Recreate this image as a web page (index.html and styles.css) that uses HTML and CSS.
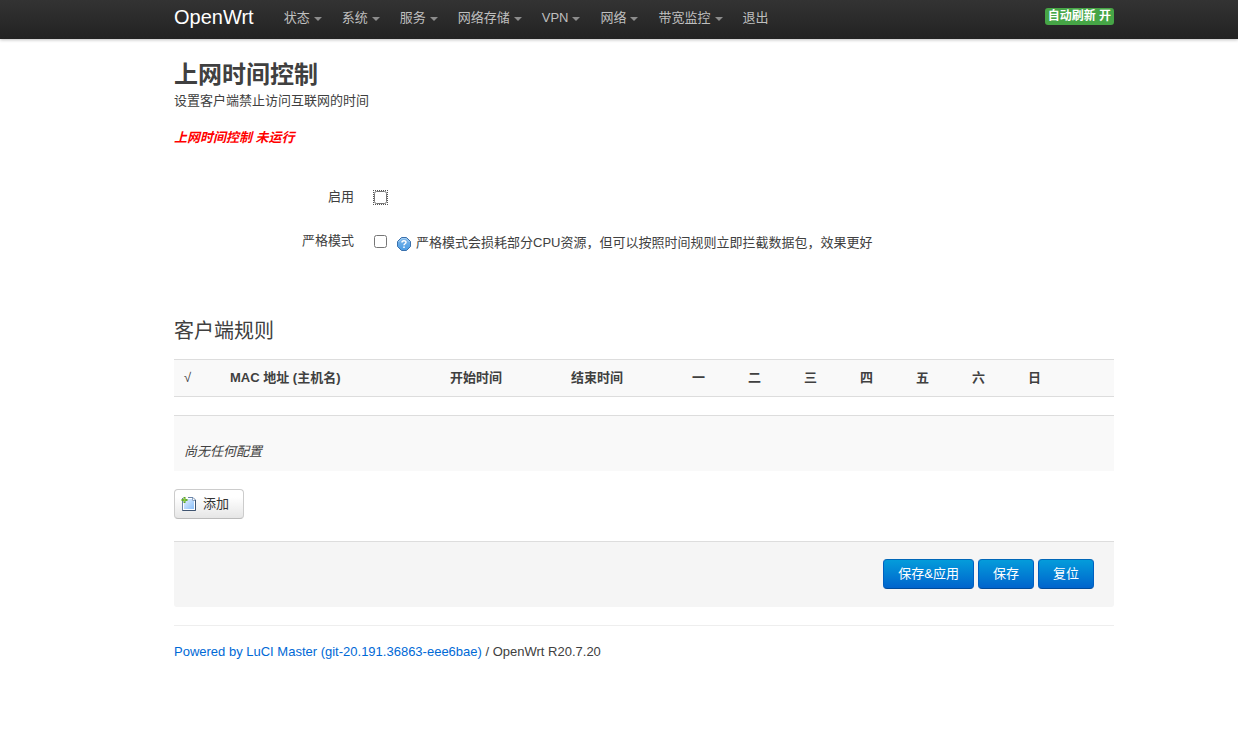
FILE: index.html
```html
<!DOCTYPE html>
<html lang="zh-CN">
<head>
<meta charset="utf-8">
<title>OpenWrt - 上网时间控制</title>
<link rel="stylesheet" href="styles.css">
</head>
<body>
<header class="topbar">
  <div class="container topbar-inner">
    <a class="brand" href="#">OpenWrt</a>
    <nav class="nav">
      <a class="menu" href="#">状态</a>
      <a class="menu" href="#">系统</a>
      <a class="menu" href="#">服务</a>
      <a class="menu" href="#">网络存储</a>
      <a class="menu" href="#">VPN</a>
      <a class="menu" href="#">网络</a>
      <a class="menu" href="#">带宽监控</a>
      <a href="#">退出</a>
    </nav>
    <button class="refresh" type="button">自动刷新 开</button>
  </div>
</header>
<main class="container">
  <h2>上网时间控制</h2>
  <p class="descr">设置客户端禁止访问互联网的时间</p>
  <p class="status">上网时间控制 未运行</p>
  <form>
    <div class="options">
      <div class="option">
        <label for="enable">启用</label>
        <input class="check focused" type="checkbox" id="enable">
      </div>
      <div class="option">
        <label for="strict">严格模式</label>
        <input class="check" type="checkbox" id="strict">
        <p class="help">
          <svg width="14" height="14" viewBox="0 0 14 14" aria-hidden="true">
            <defs><linearGradient id="ball" x1="0" y1="0" x2="0" y2="1"><stop offset="0" stop-color="#7fb8ea"/><stop offset="1" stop-color="#4a9ce4"/></linearGradient></defs>
            <path d="M4.5.5h5l4 4v5l-4 4h-5l-4-4v-5z" fill="url(#ball)" stroke="#3a70ac"/>
            <path d="M1.5 5l3.300-3.400h4.400L12.500 5" fill="none" stroke="#a8d0f4"/>
            <path d="M5 5.400C5 3.300 9 3.200 9 5.300 9 6.800 7 6.700 7 8.200M7 9.500v1.500" fill="none" stroke="#fff" stroke-width="1.500"/>
          </svg>
          <span>严格模式会损耗部分CPU资源，但可以按照时间规则立即拦截数据包，效果更好</span>
        </p>
      </div>
    </div>
    <h3>客户端规则</h3>
    <table class="rules">
      <thead>
        <tr>
          <th class="c-tick">√</th><th class="c-mac">MAC 地址 (主机名)</th><th class="c-time">开始时间</th><th class="c-time">结束时间</th>
          <th class="c-day">一</th><th class="c-day">二</th><th class="c-day">三</th><th class="c-day">四</th><th class="c-day">五</th><th class="c-day">六</th><th>日</th>
        </tr>
      </thead>
    </table>
    <p class="empty">尚无任何配置</p>
    <button class="btn add" type="button">
      <svg width="16" height="16" viewBox="0 0 16 16" aria-hidden="true">
        <defs><linearGradient id="page" x1="0" y1="0" x2="1" y2="1"><stop offset="0" stop-color="#e4f1ff"/><stop offset="1" stop-color="#8cc0fa"/></linearGradient></defs>
        <path d="M1.500 1.500H12L14.500 4v10.500h-13z" fill="#fff" stroke="#6b85a8"/>
        <path d="M14.500 4v10.500h-13" fill="none" stroke="#3f5470"/>
        <path d="M3 3h8v2h2v8H3z" fill="url(#page)"/>
        <path d="M11.500 2v2.500H14" fill="none" stroke="#8ba3c2"/>
        <path d="M0 0h7v2H0z" fill="#fcfcfc"/>
        <path d="M3.500 1v6M.5 4h6" stroke="#5ba329" stroke-width="2"/>
        <path d="M3.500 2v4M1.500 4h4" stroke="#8fcb45"/>
      </svg>
      添加
    </button>
    <div class="actions">
      <button class="btn primary" type="submit">保存&amp;应用</button>
      <button class="btn primary" type="submit">保存</button>
      <button class="btn primary" type="reset">复位</button>
    </div>
  </form>
  <footer><a href="#">Powered by LuCI Master (git-20.191.36863-eee6bae)</a> / OpenWrt R20.7.20</footer>
</main>
</body>
</html>
```
FILE: styles.css
```css
* {
  box-sizing: border-box;
}

body {
  margin: 0;
  background: #fff;
  color: #404040;
  font: 13px/18px "Liberation Sans", Arial, "Noto Sans CJK SC", sans-serif;
}

h2,
h3,
p {
  margin: 0;
}

a {
  color: #0069d6;
  text-decoration: none;
}

button {
  font-family: inherit;
  cursor: pointer;
}

.container {
  max-width: 990px;
  margin: 0 auto;
  padding-left: 50px;
}

@media (min-width: 1040px) {
  body {
    padding-left: 50px;
  }

  .topbar {
    margin-left: -50px;
    padding-left: 50px;
  }

  .container {
    max-width: 940px;
    padding-left: 0;
  }
}

.topbar {
  height: 39px;
  background: linear-gradient(#333, #222);
  box-shadow: 0 1px 3px rgba(0, 0, 0, 0.25);
}

.topbar-inner {
  display: flex;
  align-items: flex-start;
}

.brand {
  padding: 7px 20px 12px 0;
  font-size: 20px;
  line-height: 20px;
  color: #fff;
}

.nav {
  display: flex;
  flex: 1;
}

.nav a {
  padding: 9px 10px 12px;
  color: #bfbfbf;
  white-space: nowrap;
}

.menu::after {
  content: "";
  display: inline-block;
  margin-left: 4px;
  border: 4px solid transparent;
  border-top-color: #8c8c8c;
  border-bottom: 0;
  vertical-align: 1px;
}

.refresh {
  margin-top: 8px;
  padding: 0 3px 1px;
  border: 0;
  border-radius: 3px;
  background: #46a546;
  color: #fff;
  font-size: 12px;
  font-weight: bold;
  line-height: 16px;
}

h2 {
  padding-top: 18px;
  font-size: 24px;
  line-height: 35px;
}

.status {
  margin-top: 19px;
  color: #f00;
  font-style: italic;
  font-weight: bold;
}

.options {
  display: grid;
  gap: 26px;
  padding: 41px 0 61px;
}

.option {
  display: flex;
  align-items: flex-start;
}

.option label {
  width: 180px;
  text-align: right;
}

.check {
  width: 13px;
  height: 13px;
  margin: 3px 10px 0 20px;
}

.focused {
  outline: 1px dotted #555;
}

.help {
  display: flex;
  align-items: center;
  gap: 5px;
  padding-top: 2px;
}

.help svg {
  margin-top: 2px;
}

h3 {
  font-size: 20px;
  font-weight: normal;
  line-height: 36px;
}

.rules {
  width: 100%;
  margin: 10px 0 18px;
  border-collapse: collapse;
  table-layout: fixed;
  background: #f9f9f9;
}

.rules th {
  padding: 9px 10px;
  border: solid #ddd;
  border-width: 1px 0;
  text-align: left;
}

.rules .c-tick {
  width: 46px;
  font-weight: normal;
}

.c-mac {
  width: 220px;
}

.c-time {
  width: 121px;
}

.c-day {
  width: 56px;
}

.empty {
  padding: 27px 10px 10px;
  border-top: 1px solid #ddd;
  background: #f9f9f9;
  font-style: italic;
}

.btn {
  padding: 5px 14px;
  border: 1px solid #ccc;
  border-bottom-color: #bbb;
  border-radius: 4px;
  background: linear-gradient(#fff 25%, #e6e6e6);
  color: #333;
  font-size: 13px;
  line-height: 18px;
}

.add {
  display: flex;
  align-items: center;
  gap: 6px;
  margin: 18px 0 22px;
  padding: 5px 14px 5px 6px;
}

.actions {
  display: flex;
  justify-content: flex-end;
  gap: 4px;
  margin-bottom: 18px;
  padding: 17px 20px 18px;
  border-top: 1px solid #ddd;
  border-radius: 0 0 3px 3px;
  background: #f5f5f5;
}

.primary {
  border-color: #0067b8 #0060c0 #004b9a;
  background: linear-gradient(#049cdb, #0064cd);
  color: #fff;
}

footer {
  padding: 17px 0;
  border-top: 1px solid #eee;
}
```
